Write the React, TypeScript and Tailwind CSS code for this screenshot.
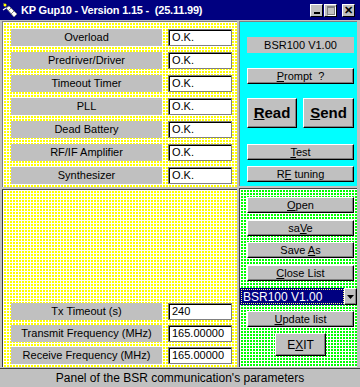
const yellow =
  "bg-[#ffff00] bg-[linear-gradient(90deg,#ffffff_1px,transparent_1px),linear-gradient(#ffffff_1px,transparent_1px)] bg-[length:3px_3px]";
const green =
  "bg-[#00ff00] bg-[linear-gradient(90deg,#ffffff_1px,transparent_1px),linear-gradient(#ffffff_1px,transparent_1px)] bg-[length:3px_3px]";

function Btn({ children, className = "" }: { children: React.ReactNode; className?: string }) {
  return (
    <div
      className={`flex items-center justify-center bg-[#c0c0c0] border-t border-l border-t-white border-l-white border-b border-r border-b-black border-r-black shadow-[inset_-1px_-1px_0_#808080] text-black ${className}`}
    >
      {children}
    </div>
  );
}

function Row({ label, value }: { label: string; value: string }) {
  return (
    <div className="flex items-center">
      <div className="flex h-[17px] w-[151px] items-center justify-center bg-[#c0c0c0] text-[11px] text-black">
        {label}
      </div>
      <div className="ml-[6px] flex h-[17px] w-[64px] items-center border border-[#808080] bg-white pl-[3px] text-[11px] text-black shadow-[inset_1px_1px_0_#000]">
        {value}
      </div>
    </div>
  );
}

function AppIcon() {
  return (
    <svg width="16" height="16" viewBox="0 0 16 16">
      <path d="M1 1 L4 3 L3 4 Z" fill="#ffff00" />
      <circle cx="3" cy="3" r="1.5" fill="#ffff00" />
      <path d="M4 6 L7 4 L15 12 L12 15 Z" fill="#ffffff" stroke="#808080" strokeWidth="0.8" />
      <path d="M6 9 L9 6" stroke="#808080" strokeWidth="1" />
      <path d="M9 12 L12 9" stroke="#808080" strokeWidth="1" />
      <path d="M1 8 L4 6" stroke="#ffffff" strokeWidth="1.2" />
    </svg>
  );
}

export default function App() {
  return (
    <div className="flex h-[387px] w-[360px] flex-col overflow-hidden bg-[#c0c0c0] font-['Liberation_Sans',Arial,sans-serif] text-black">
      {/* Title bar */}
      <div className="flex h-[20px] shrink-0 items-center bg-[#000080] pl-[2px] pr-[5px]">
        <AppIcon />
        <div className="ml-[3px] whitespace-pre text-[11px] font-bold tracking-[-0.2px] text-white">
          KP Gup10 - Version 1.15 -  (25.11.99)
        </div>
        <div className="ml-auto flex items-center">
          <div className="flex h-[13px] w-[13px] items-end justify-center border-t border-l border-t-white border-l-white border-b border-r border-b-black border-r-black bg-[#c0c0c0] pb-[2px]">
            <div className="h-[2px] w-[6px] bg-black" />
          </div>
          <div className="ml-[1px] flex h-[13px] w-[13px] items-center justify-center border-t border-l border-t-white border-l-white border-b border-r border-b-black border-r-black bg-[#c0c0c0]">
            <div className="h-[9px] w-[8px] border border-t-2 border-[#808080] shadow-[1px_1px_0_#fff]" />
          </div>
          <div className="ml-[5px] flex h-[13px] w-[13px] items-center justify-center border-t border-l border-t-white border-l-white border-b border-r border-b-black border-r-black bg-[#c0c0c0] text-[11px] font-bold leading-none">
            ✕
          </div>
        </div>
      </div>

      {/* Body */}
      <div className="flex h-[348px] shrink-0 gap-[2px] px-[2px] py-[1px]">
        {/* Left column */}
        <div className="flex w-[235px] flex-col gap-[2px]">
          <div className={`flex h-[166px] flex-col gap-[6px] border-t border-l border-[#808080] pl-[8px] pt-[7px] ${yellow}`}>
            <Row label="Overload" value="O.K." />
            <Row label="Predriver/Driver" value="O.K." />
            <Row label="Timeout Timer" value="O.K." />
            <Row label="PLL" value="O.K." />
            <Row label="Dead Battery" value="O.K." />
            <Row label="RF/IF Amplifier" value="O.K." />
            <Row label="Synthesizer" value="O.K." />
          </div>
          <div className={`flex flex-1 flex-col justify-end gap-[5px] border-t border-l border-[#404040] pb-[3px] pl-[8px] ${yellow}`}>
            <Row label="Tx Timeout (s)" value="240" />
            <Row label="Transmit Frequency (MHz)" value="165.00000" />
            <Row label="Receive Frequency (MHz)" value="165.00000" />
          </div>
        </div>

        {/* Right column */}
        <div className="flex w-[118px] flex-col gap-[2px]">
          <div className="flex h-[165px] flex-col border-t border-l border-[#808080] bg-[#00ffff] pl-[7px] text-[11px]">
            <div className="mt-[15px] flex h-[16px] w-[107px] items-center justify-center bg-[#c0c0c0]">
              BSR100 V1.00
            </div>
            <Btn className="mt-[15px] h-[16px] w-[107px]">
              <span className="whitespace-pre"><u>P</u>rompt  ?</span>
            </Btn>
            <div className="mt-[14px] flex w-[107px] gap-[6px]">
              <Btn className="h-[30px] w-[50px] text-[15px] font-bold">
                <span><u>R</u>ead</span>
              </Btn>
              <Btn className="h-[30px] w-[51px] text-[15px] font-bold">
                <span><u>S</u>end</span>
              </Btn>
            </div>
            <Btn className="mt-[16px] h-[16px] w-[107px]">
              <span><u>T</u>est</span>
            </Btn>
            <Btn className="mt-[6px] h-[16px] w-[107px]">
              <span>R<u>F</u> tuning</span>
            </Btn>
          </div>

          <div className={`flex flex-1 flex-col border-t border-l border-[#404040] text-[11px] ${green}`}>
            <Btn className="ml-[7px] mt-[8px] h-[16px] w-[107px]">
              <span><u>O</u>pen</span>
            </Btn>
            <Btn className="ml-[7px] mt-[7px] h-[16px] w-[107px]">
              <span>sa<u>V</u>e</span>
            </Btn>
            <Btn className="ml-[7px] mt-[6px] h-[16px] w-[107px]">
              <span>Save <u>A</u>s</span>
            </Btn>
            <Btn className="ml-[7px] mt-[7px] h-[16px] w-[107px]">
              <span><u>C</u>lose List</span>
            </Btn>
            <div className="mt-[7px] flex h-[17px] w-full">
              <div className="flex flex-1 items-center bg-[#000080] pl-[1px]">
                <div className="flex h-[15px] w-full items-center border border-dotted border-[#ffff80] pl-[1px] text-[12px] text-white">
                  BSR100 V1.00
                </div>
              </div>
              <Btn className="h-[17px] w-[13px] shrink-0">
                <svg width="7" height="4" viewBox="0 0 7 4">
                  <path d="M0 0 H7 L3.5 4 Z" fill="#000" />
                </svg>
              </Btn>
            </div>
            <Btn className="ml-[7px] mt-[6px] h-[16px] w-[107px]">
              <span><u>U</u>pdate list</span>
            </Btn>
            <Btn className="ml-[35px] mt-[6px] h-[23px] w-[51px] text-[12px]">
              <span>E<u>X</u>IT</span>
            </Btn>
          </div>
        </div>
      </div>

      {/* Status bar */}
      <div className="flex flex-1 items-center justify-center border-t border-[#404040] text-[12px] text-black">
        Panel of the BSR communication's parameters
      </div>
    </div>
  );
}
